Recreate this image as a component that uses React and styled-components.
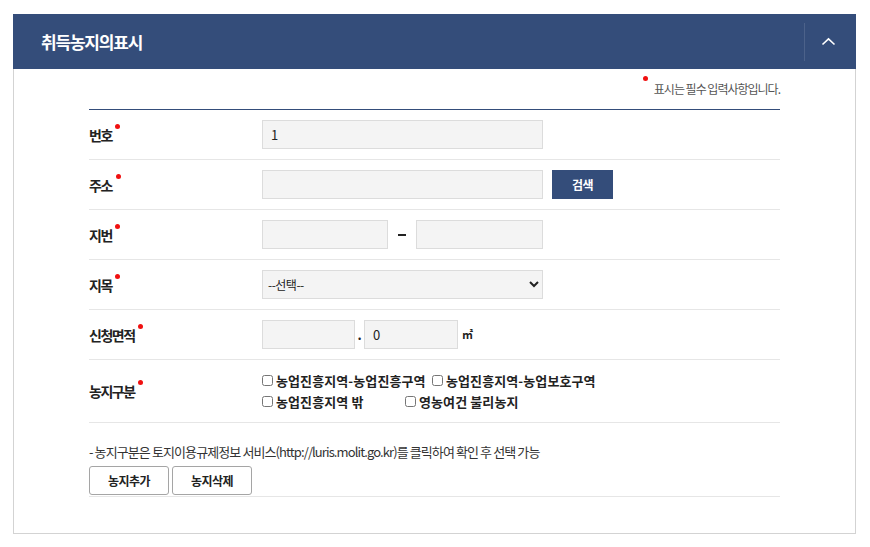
import React from "react";
import styled, { createGlobalStyle } from "styled-components";

const GlobalStyle = createGlobalStyle`
  html, body {
    margin: 0;
    padding: 0;
    background: #fff;
    font-family: "Noto Sans CJK KR", "Noto Sans", sans-serif;
    color: #222;
  }
`;

const Page = styled.div`
  padding: 14px 14px 0 13px;
  width: 843px;
`;

const Header = styled.div`
  display: flex;
  align-items: center;
  height: 55px;
  background: #344d7a;
  padding-left: 28px;

  h2 {
    flex: 1;
    margin: 0;
    color: #fff;
    font-size: 17px;
    font-weight: 700;
    letter-spacing: -1.2px;
  }
`;

const Toggle = styled.button`
  width: 52px;
  height: 38px;
  border: 0;
  border-left: 1px solid rgba(255, 255, 255, 0.12);
  background: transparent;
  display: flex;
  align-items: center;
  justify-content: center;
  padding: 0 4px 0 0;
  cursor: pointer;
`;

const Body = styled.div`
  border: 1px solid #d3d3d3;
  border-top: 0;
  padding: 10px 75px 36px 75px;
`;

const Note = styled.p`
  margin: 0 0 10px;
  line-height: 20px;
  text-align: right;
  font-size: 12px;
  letter-spacing: -1px;
  color: #555;
`;

const Dot = styled.i`
  display: inline-block;
  width: 5px;
  height: 5px;
  border-radius: 50%;
  background: #f01010;
  vertical-align: top;
  margin: ${(p) => (p.$note ? "-3px 6px 0 0" : "-1px 0 0 3px")};
`;

const Table = styled.div`
  border-top: 1px solid #344d7a;
`;

const Row = styled.div`
  box-sizing: border-box;
  display: flex;
  align-items: center;
  min-height: 50px;
  padding: ${(p) => (p.$tall ? "10px 0" : "0")};
  border-bottom: 1px solid #e6e6e6;
`;

const Label = styled.div`
  width: 173px;
  flex: none;
  font-size: 14px;
  font-weight: 700;
  letter-spacing: -1.5px;
  color: #222;
  line-height: 20px;
`;

const Field = styled.div`
  display: flex;
  align-items: center;
  flex-wrap: wrap;
`;

const Input = styled.input`
  box-sizing: border-box;
  width: ${(p) => p.$w}px;
  height: 29px;
  border: 1px solid #dcdcdc;
  background: #f4f4f4;
  padding: 0 8px;
  font-family: inherit;
  font-size: 13px;
  color: #222;
  outline: none;
`;

const Select = styled.select`
  box-sizing: border-box;
  width: 281px;
  height: 29px;
  border: 1px solid #dcdcdc;
  background: #f4f4f4;
  padding: 0 1px;
  font-family: inherit;
  font-size: 12px;
  color: #222;
  letter-spacing: -0.5px;
`;

const NavyButton = styled.button`
  margin-left: 9px;
  width: 61px;
  height: 29px;
  border: 0;
  background: #344d7a;
  color: #fff;
  font-family: inherit;
  font-size: 12px;
  font-weight: 700;
  letter-spacing: -0.5px;
`;

const Sep = styled.span`
  width: ${(p) => p.$w}px;
  text-align: center;
  font-size: ${(p) => p.$size || 14}px;
  font-weight: 700;
  color: #222;
`;

const Dash = styled.span`
  width: 28px;
  display: flex;
  justify-content: center;

  &::before {
    content: "";
    width: 8px;
    height: 2px;
    background: #222;
  }
`;

const Unit = styled.span`
  margin-left: 4px;
  font-size: 11px;
  font-weight: 700;
  color: #222;
  align-self: flex-start;
  margin-top: 6px;
`;

const Checks = styled.div`
  display: flex;
  flex-direction: column;
`;

const CheckLine = styled.div`
  display: flex;
  height: 21px;
  align-items: center;
`;

const Check = styled.label`
  display: flex;
  align-items: center;
  width: ${(p) => (p.$w ? `${p.$w}px` : "auto")};
  font-size: 13px;
  font-weight: 700;
  letter-spacing: 0.1px;
  color: #222;

  input {
    margin: 0 3px 0 0;
    width: 11px;
    height: 11px;
  }
`;

const Help = styled.p`
  margin: 19px 0 4px;
  line-height: 20px;
  font-size: 13px;
  letter-spacing: -0.9px;
  color: #333;
`;

const ButtonRow = styled.div`
  display: flex;
  gap: 3px;
  padding-bottom: 1px;
  border-bottom: 1px solid #e6e6e6;
`;

const GhostButton = styled.button`
  width: 80px;
  height: 29px;
  border: 1px solid #a5a5a5;
  border-radius: 3px;
  background: #fff;
  font-family: inherit;
  font-size: 12px;
  font-weight: 700;
  letter-spacing: -0.5px;
  color: #222;
`;

const Required = ({ children }) => (
  <Label>
    {children}
    <Dot />
  </Label>
);

export default function App() {
  return (
    <Page>
      <GlobalStyle />
      <Header>
        <h2>취득농지의표시</h2>
        <Toggle aria-label="접기">
          <svg width="15" height="9" viewBox="0 0 15 9">
            <path d="M1.5 7.5 L7.5 1.8 L13.5 7.5" fill="none" stroke="#fff" strokeWidth="1.6" />
          </svg>
        </Toggle>
      </Header>
      <Body>
        <Note>
          <Dot $note />
          표시는 필수 입력사항입니다.
        </Note>
        <Table>
          <Row>
            <Required>번호</Required>
            <Field>
              <Input $w={281} defaultValue="1" />
            </Field>
          </Row>
          <Row>
            <Required>주소 </Required>
            <Field>
              <Input $w={281} />
              <NavyButton>검색</NavyButton>
            </Field>
          </Row>
          <Row>
            <Required>지번</Required>
            <Field>
              <Input $w={126} />
              <Dash />
              <Input $w={127} />
            </Field>
          </Row>
          <Row>
            <Required>지목</Required>
            <Field>
              <Select defaultValue="">
                <option value="">--선택--</option>
              </Select>
            </Field>
          </Row>
          <Row>
            <Required>신청면적</Required>
            <Field>
              <Input $w={93} />
              <Sep $w={9} $size={13}>.</Sep>
              <Input $w={94} defaultValue="0" />
              <Unit>㎡</Unit>
            </Field>
          </Row>
          <Row $tall>
            <Required>농지구분</Required>
            <Checks>
              <CheckLine>
                <Check $w={170}>
                  <input type="checkbox" />
                  농업진흥지역-농업진흥구역
                </Check>
                <Check>
                  <input type="checkbox" />
                  농업진흥지역-농업보호구역
                </Check>
              </CheckLine>
              <CheckLine>
                <Check $w={143}>
                  <input type="checkbox" />
                  농업진흥지역 밖
                </Check>
                <Check>
                  <input type="checkbox" />
                  영농여건 불리농지
                </Check>
              </CheckLine>
            </Checks>
          </Row>
        </Table>
        <Help>- 농지구분은 토지이용규제정보 서비스(http://luris.molit.go.kr)를 클릭하여 확인 후 선택 가능</Help>
        <ButtonRow>
          <GhostButton>농지추가</GhostButton>
          <GhostButton>농지삭제</GhostButton>
        </ButtonRow>
      </Body>
    </Page>
  );
}
